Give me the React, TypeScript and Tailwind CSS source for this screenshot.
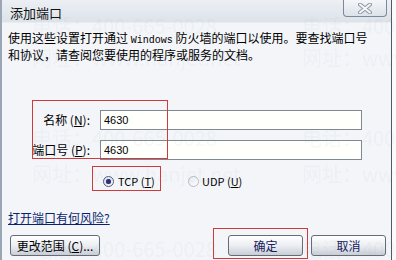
import React from "react";

function CloseGlyph() {
  return (
    <svg width="14" height="11" viewBox="0 0 14 11">
      <path d="M2 1.5 L12 9.5 M12 1.5 L2 9.5" stroke="#8e98a4" strokeWidth="4" strokeLinecap="round" fill="none" />
      <path d="M2 1.5 L12 9.5 M12 1.5 L2 9.5" stroke="#f7f8fa" strokeWidth="2" strokeLinecap="round" fill="none" />
    </svg>
  );
}

function Radio({ checked }: { checked?: boolean }) {
  return (
    <span
      className={
        "flex items-center justify-center w-[11px] h-[11px] rounded-full border " +
        (checked ? "border-[#4a5a78] bg-gradient-to-br from-[#dfe3ea] to-white" : "border-[#b4bcc6] bg-gradient-to-br from-[#e6e9ee] to-white")
      }
    >
      {checked && <span className="w-[5px] h-[5px] rounded-full bg-[#2e2f7a] shadow-[0_0_1px_#6d72c8]" />}
    </span>
  );
}

function XpButton({ children, className }: { children: React.ReactNode; className?: string }) {
  return (
    <div
      className={
        "h-[21px] flex items-center justify-center rounded-[3px] border border-[#646c76] bg-gradient-to-b from-white via-[#eceef2] to-[#c9ced6] " +
        (className ?? "")
      }
    >
      {children}
    </div>
  );
}

const watermarks = [
  { t: "电话：400-665-0028", x: 32, y: 16 },
  { t: "电话：400-665-0028", x: 302, y: 16 },
  { t: "网址：www.hanjet.net", x: 32, y: 48 },
  { t: "网址：www.hanjet.net", x: 302, y: 48 },
  { t: "电话：400-665-0028", x: 32, y: 128 },
  { t: "电话：400-665-0028", x: 302, y: 128 },
  { t: "网址：www.hanjet.net", x: 32, y: 164 },
  { t: "网址：www.hanjet.net", x: 302, y: 164 },
  { t: "电话：400-665-0028", x: 32, y: 239 },
  { t: "电话：400-665-0028", x: 302, y: 239 },
];

export default function App() {
  return (
    <div className="relative w-[396px] h-[260px] overflow-hidden bg-white text-[12px] leading-[14px] text-black font-['Noto_Sans_CJK_SC','Noto_Sans',sans-serif]">
      <div className="flex h-full">
        <div className="w-[392px] h-full flex flex-col border-l-2 border-l-[#9aa6b4] border-r border-r-[#4f5a66] bg-[#f3f5f9]">
          {/* title bar */}
          <div className="h-[23px] shrink-0 flex justify-between bg-gradient-to-b from-[#eceff4] to-[#dde3ea] border-b border-[#e9edf2]">
            <span className="pl-[8px] pt-[5px] text-[13px] leading-[16px] text-[#111]">添加端口</span>
            <div className="mr-[4px] w-[44px] h-[17px] flex items-center justify-center border border-t-0 border-[#7d8896] rounded-b-[4px] bg-gradient-to-b from-[#f4f6f9] to-[#dde2e9]">
              <CloseGlyph />
            </div>
          </div>

          {/* body */}
          <div className="flex-1 flex flex-col pl-[6px] pr-[5px] pt-[8px]">
            <p>
              使用这些设置打开通过 <span className="font-['Liberation_Mono',monospace] text-[10px]">Windows</span> 防火墙的端口以使用。要查找端口号
              <br />
              和协议，请查阅您要使用的程序或服务的文档。
            </p>

            <div className="mt-[48px] flex items-center">
              <span className="w-[82px] text-right">
                名称 (<u>N</u>):
              </span>
              <div className="ml-[10px] w-[262px] h-[20px] border border-[#7f8994] bg-[#fffffc] pl-[3px] flex items-center text-[11px] font-['Liberation_Sans',sans-serif]">
                4630
              </div>
            </div>
            <div className="mt-[10px] flex items-center">
              <span className="w-[82px] text-right">
                端口号 (<u>P</u>):
              </span>
              <div className="ml-[10px] w-[262px] h-[20px] border border-[#7f8994] bg-[#fffffc] pl-[3px] flex items-center text-[11px] font-['Liberation_Sans',sans-serif]">
                4630
              </div>
            </div>

            <div className="mt-[11px] h-[20px] flex items-center pl-[95px] text-[11px]">
              <div className="w-[85px] flex items-center gap-[4px]">
                <Radio checked />
                <span>
                  TCP (<u>T</u>)
                </span>
              </div>
              <div className="flex items-center gap-[3px]">
                <Radio />
                <span>
                  UDP (<u>U</u>)
                </span>
              </div>
            </div>

            <div className="mt-[19px] h-[16px] flex items-center">
              <span className="underline text-[#0c1f6e]">打开端口有何风险?</span>
            </div>

            <div className="mt-[9px] flex items-center">
              <XpButton className="ml-[2px] w-[90px]">更改范围 (<u>C</u>)...</XpButton>
              <div className="flex-1" />
              <XpButton className="w-[75px] text-[#14205c]">确定</XpButton>
              <XpButton className="ml-[8px] w-[75px] text-[#14205c]">取消</XpButton>
            </div>
          </div>
        </div>
        <div className="flex-1 bg-[#fbfbfc]" />
      </div>

      {/* watermark text printed over the screenshot */}
      {watermarks.map((w, i) => (
        <span
          key={i}
          className="pointer-events-none absolute whitespace-nowrap text-[20px] leading-[20px] text-[#8a96a6]/[0.08]"
          style={{ left: w.x, top: w.y }}
        >
          {w.t}
        </span>
      ))}

      {/* red annotation boxes */}
      <div className="pointer-events-none absolute left-[32px] top-[100px] w-[136px] h-[59px] border border-[#cf3a3a]" />
      <div className="pointer-events-none absolute left-[92px] top-[166px] w-[69px] h-[25px] border border-[#cf3a3a]" />
      <div className="pointer-events-none absolute left-[213px] top-[228px] w-[95px] h-[31px] border border-[#cf3a3a]" />
    </div>
  );
}
